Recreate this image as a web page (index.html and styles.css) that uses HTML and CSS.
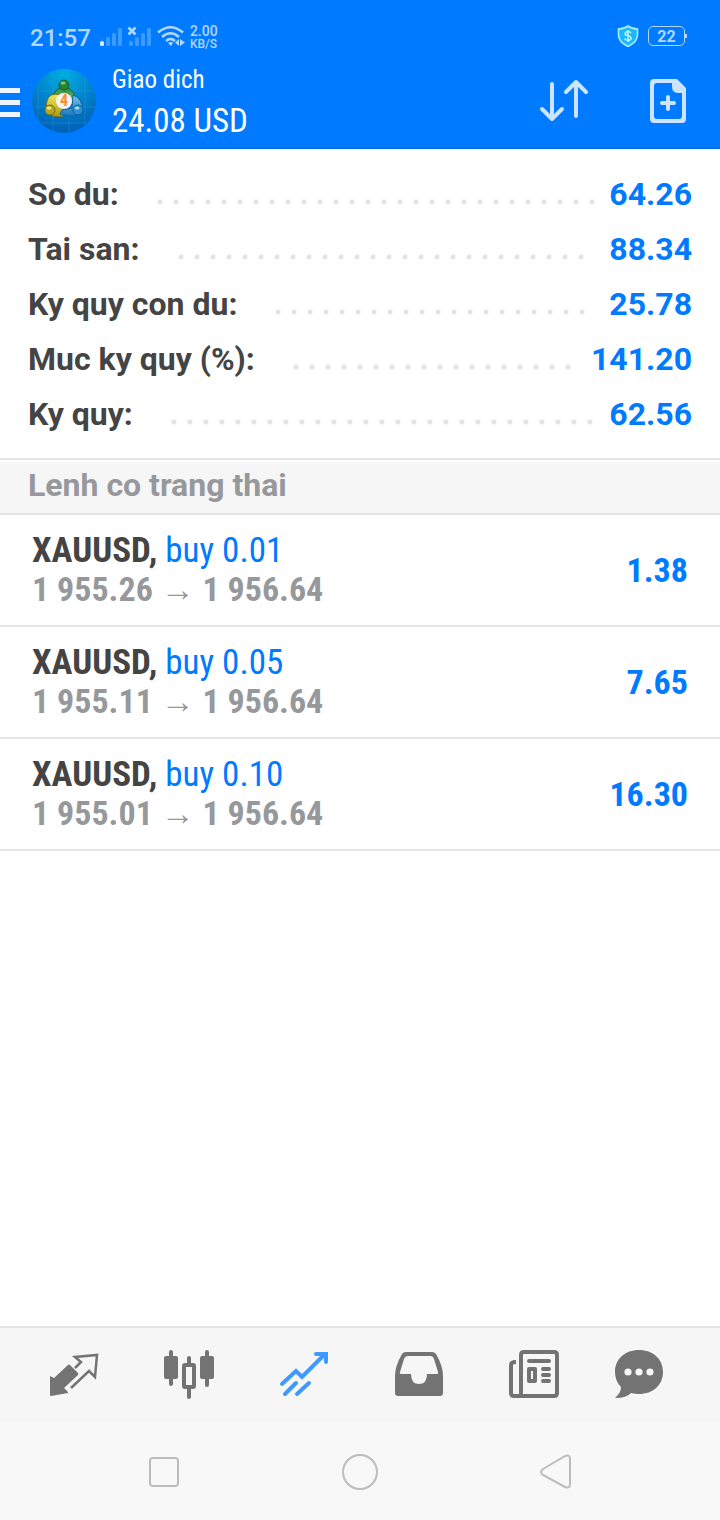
FILE: index.html
```html
<!DOCTYPE html>
<html lang="vi">
<head>
<meta charset="utf-8">
<meta name="viewport" content="width=device-width, initial-scale=1">
<title>Giao dich</title>
<link rel="stylesheet" href="styles.css">
</head>
<body>
<header class="top">
  <div class="status">
    <time class="clock">21:57</time>
    <svg class="signals" width="90" height="30" viewBox="0 -5 90 30" aria-hidden="true">
      <g fill="#3d9aff"><rect x="6" y="11" width="4" height="9" rx="1.500"/><rect x="12" y="7" width="4" height="13" rx="1.500"/><rect x="18" y="2" width="4" height="18" rx="1.500"/><rect x="29" y="15" width="4" height="5" rx="1.500"/><rect x="35" y="11" width="4" height="9" rx="1.500"/><rect x="41" y="7" width="4" height="13" rx="1.500"/><rect x="47" y="2" width="4" height="18" rx="1.500"/></g>
      <rect x="0" y="15" width="4" height="5" rx="1.500" fill="#d4e8ff"/>
      <g fill="none" stroke="#b2d7ff" stroke-width="2.600"><path d="M28.500 1.500l7 7m0-7l-7 7"/><path d="M58 6.500q12.500-10.500 25 0M62 11q8.500-7.500 17 0M66 15q4.500-4 9 0"/></g>
      <path d="M68 17q3-2 5 0l-2 3zM79 13v7l-4-3.500zM80 13l5 3.500-5 3.500z" fill="#b2d7ff"/>
    </svg>
    <span class="speed"><span>2.00</span><span>KB/S</span></span>
    <svg class="shield" width="22" height="22" viewBox="0 0 22 22" aria-hidden="true"><path d="M11 1q4 3 9.500 3v6q0 7-9.500 11.500Q1.500 17 1.500 10V4Q7 4 11 1z" fill="#1cb9fa" stroke="#a8edff" stroke-width="1.600"/><path d="M14 8q-1-1.500-3-1.500T8 8.500q0 1.700 3 2.200t3 2.500q0 2-3 2t-3.200-1.700M11 5v12" fill="none" stroke="#b8f1ff" stroke-width="1.600"/></svg>
    <span class="battery">22</span>
  </div>
  <div class="bar">
    <button class="menu" aria-label="Menu"><span></span><span></span><span></span></button>
    <svg class="logo" width="64" height="64" viewBox="0 0 64 64" aria-hidden="true">
      <defs>
        <radialGradient id="sky" cx=".5" cy=".08" r=".9"><stop offset="0" stop-color="#00aee2"/><stop offset=".5" stop-color="#0085cc"/><stop offset="1" stop-color="#0061b7"/></radialGradient>
        <linearGradient id="green" x2="0" y2="1"><stop offset="0" stop-color="#268c38"/><stop offset="1" stop-color="#8bc48a"/></linearGradient>
        <linearGradient id="gold" x2="0" y2="1"><stop offset="0" stop-color="#f1e95d"/><stop offset="1" stop-color="#a99a14"/></linearGradient>
        <linearGradient id="blue" x2="0" y2="1"><stop offset="0" stop-color="#77c5ec"/><stop offset="1" stop-color="#1676bd"/></linearGradient>
      </defs>
      <circle cx="32" cy="32" r="32" fill="url(#sky)"/>
      <path d="M6 14v36M21 2v60M37 1v62M53 9v46M9 22h52M1 38h62M10 54h44" stroke="#3ba6dc" stroke-opacity=".3" fill="none"/>
      <path d="M21 34q-1-15 11-16 12 1 12 18l-6-1-6-7z" fill="url(#green)" stroke="#176426"/>
      <path d="M29 26q-12-3-14 6-2 7 0 12 6 5 16 3l2-5-6-5z" fill="url(#gold)" stroke="#75711c"/>
      <path d="M41 26q9 3 10 15-6 10-23 4l2-4 10-2z" fill="url(#blue)" stroke="#10649f"/>
      <circle cx="32" cy="16" r="5" fill="#258537" stroke="#12612a"/><ellipse cx="31" cy="14" rx="2.500" ry="1.500" fill="#83c584"/>
      <circle cx="18" cy="41" r="5" fill="#b6a81d" stroke="#716d1c"/><ellipse cx="17" cy="39" rx="2.500" ry="1.500" fill="#eee991"/>
      <circle cx="46" cy="41" r="5" fill="#2e91cf" stroke="#0d5d9b"/><ellipse cx="45" cy="39" rx="2.500" ry="1.500" fill="#a3dcf4"/>
      <circle cx="32" cy="32" r="8" fill="#f6f3ee"/>
      <text x="32" y="37" class="logo-digit">4</text>
    </svg>
    <div class="heading"><h1 class="title">Giao dich</h1><span class="profit">24.08 USD</span></div>
    <button class="action" aria-label="Sort"><svg width="50" height="44" viewBox="0 0 50 44"><path d="M13 5v35M3 30l10 10 10-10M37 37V3M27 13L37 3l10 10" fill="none" stroke="#cce4ff" stroke-width="4" stroke-linecap="round" stroke-linejoin="round"/></svg></button>
    <button class="action" aria-label="New order"><svg width="36" height="44" viewBox="0 0 36 44"><path fill="#cce4ff" fill-rule="evenodd" d="M4 0H27l9 9v31q0 4-4 4H4q-4 0-4-4V4Q0 0 4 0zM7 4Q4 4 4 7v30q0 3 3 3h22q3 0 3-3V14h-3q-7 0-7-6V4z"/><path d="M18 18v12M12 24h12" stroke="#cce4ff" stroke-width="4" stroke-linecap="round"/></svg></button>
  </div>
</header>
<main>
  <dl class="summary">
    <div class="line"><dt>So du:</dt><dd class="leader"></dd><dd class="amount">64.26</dd></div>
    <div class="line"><dt>Tai san:</dt><dd class="leader"></dd><dd class="amount">88.34</dd></div>
    <div class="line"><dt>Ky quy con du:</dt><dd class="leader"></dd><dd class="amount">25.78</dd></div>
    <div class="line"><dt>Muc ky quy (%):</dt><dd class="leader"></dd><dd class="amount">141.20</dd></div>
    <div class="line"><dt>Ky quy:</dt><dd class="leader"></dd><dd class="amount">62.56</dd></div>
  </dl>
  <h2 class="section">Lenh co trang thai</h2>
  <ul class="trades">
    <li class="trade"><div class="details"><p class="order"><strong>XAUUSD,</strong> buy 0.01</p><p class="prices">1 955.26 <span class="arrow">→</span> 1 956.64</p></div><strong class="gain">1.38</strong></li>
    <li class="trade"><div class="details"><p class="order"><strong>XAUUSD,</strong> buy 0.05</p><p class="prices">1 955.11 <span class="arrow">→</span> 1 956.64</p></div><strong class="gain">7.65</strong></li>
    <li class="trade"><div class="details"><p class="order"><strong>XAUUSD,</strong> buy 0.10</p><p class="prices">1 955.01 <span class="arrow">→</span> 1 956.64</p></div><strong class="gain">16.30</strong></li>
  </ul>
</main>
<nav class="tabs">
  <button class="tab" aria-label="Quotes"><svg width="50" height="50" viewBox="0 0 50 50"><path d="M1 26l4 2 14-13q1-1 2 0l8 8q1 1 0 2L15 38l4 4v1L2 46q-1 0-1-1z" fill="#737373"/><path d="M26 18l6-6-6-5 22-2-2 22-6-6-18 17" fill="none" stroke="#737373" stroke-width="2.500"/></svg></button>
  <button class="tab" aria-label="Charts"><svg width="50" height="50" viewBox="0 0 50 50"><g fill="#737373"><rect y="6" width="14" height="23" rx="2"/><rect x="5" width="4" height="36" rx="2"/><rect x="36" y="6" width="14" height="23" rx="2"/><rect x="41" width="4" height="37" rx="2"/><rect x="23" y="6" width="4" height="43" rx="2"/></g><rect x="20" y="15" width="10" height="22" rx="1" fill="#f6f6f6" stroke="#737373" stroke-width="4"/></svg></button>
  <button class="tab" aria-label="Trade" aria-current="page"><svg width="50" height="50" viewBox="0 0 50 50"><path d="M3 34l14-13 6 6L45 5M37 4h10v8M6 44l11-11M18 44l12-11" fill="none" stroke="#4099ff" stroke-width="4" stroke-linecap="round"/></svg></button>
  <button class="tab" aria-label="History"><svg width="50" height="50" viewBox="0 0 50 50"><path fill="#737373" fill-rule="evenodd" d="M12 2h26q3 0 4 2 7 12 7 22v17q0 3-3 3H4q-3 0-3-3V26Q1 16 8 4q1-2 4-2zm2 4q-3 0-4 3L6 22q-1 2 2 2h9q0 10 8 10t8-10h9q3 0 2-2L40 9q-1-3-4-3z"/></svg></button>
  <button class="tab" aria-label="News"><svg width="50" height="50" viewBox="0 0 50 50"><g fill="none" stroke="#737373" stroke-width="4"><path d="M12 46V5q0-3 3-3h30q3 0 3 3v38q0 3-3 3H5q-3 0-3-3V15q0-3 5-3"/><path d="M20 11h20M34 19h6M34 25h6M34 31h6" stroke-linecap="round"/><rect x="20" y="19" width="6" height="12" stroke-linejoin="round"/></g></svg></button>
  <button class="tab" aria-label="Chat"><svg width="50" height="50" viewBox="0 0 50 50"><path d="M25 0C11 0 1 9 1 22q0 9 6 15 0 6-6 11 12 0 16-5 4 1 8 1c14 0 24-9 24-22S39 0 25 0z" fill="#737373"/><g fill="#f6f6f6"><circle cx="14" cy="22" r="3.600"/><circle cx="25" cy="22" r="3.600"/><circle cx="36" cy="22" r="3.600"/></g></svg></button>
</nav>
<footer class="system">
  <button class="key" aria-label="Recent apps"><svg width="38" height="38" viewBox="0 0 38 38"><rect x="5" y="5" width="28" height="28" rx="3"/></svg></button>
  <button class="key" aria-label="Home"><svg width="38" height="38" viewBox="0 0 38 38"><circle cx="19" cy="19" r="17"/></svg></button>
  <button class="key" aria-label="Back"><svg width="38" height="38" viewBox="0 0 38 38"><path d="M28 3L6 16q-4 3 0 6l22 12q5 2 5-3V6q0-5-5-3z"/></svg></button>
</footer>
</body>
</html>
```
FILE: styles.css
```css
* { box-sizing: border-box; }
body {
  margin: 0;
  min-height: 100vh;
  display: flex;
  flex-direction: column;
  background: #fff;
  color: #444;
  font-family: Roboto, "Liberation Sans", sans-serif;
}
h1, h2, p, dl, dd, ul { margin: 0; padding: 0; }
button { padding: 0; border: 0; background: none; font: inherit; }
svg { display: block; }
main { flex: 1; }

.top { background: #007aff; border-bottom: 2px solid #006ee6; color: #fff; }
.status {
  display: flex;
  align-items: center;
  height: 60px;
  padding: 12px 35px 0 30px;
  color: #b2d7ff;
}
.clock { padding-top: 4px; font-size: 24px; line-height: 28px; font-weight: 500; }
.signals { margin-left: 9px; }
.speed { display: flex; flex-direction: column; padding-top: 4px; font-size: 12px; line-height: 13px; font-weight: 500; }
.speed span:first-child { font-size: 14px; }
.shield { margin-left: auto; }
.battery {
  position: relative;
  width: 37px;
  height: 20px;
  margin-left: 9px;
  border: 1px solid #b2d7ff;
  border-radius: 5px;
  font-size: 16px;
  line-height: 19px;
  font-weight: 700;
  text-align: center;
}
.battery::after {
  content: "";
  position: absolute;
  top: 7px;
  right: -3px;
  width: 2px;
  height: 4px;
  background: #b2d7ff;
}
.bar { display: flex; align-items: center; height: 87px; padding: 0 34px 5px 0; }
.menu { display: flex; flex-direction: column; gap: 7px; width: 20px; margin-right: 12px; padding-top: 2px; }
.menu span { height: 5px; background: #ebf5ff; }
.logo-digit { font: 700 16px "Roboto Condensed", Roboto, sans-serif; fill: #f29135; text-anchor: middle; }
.heading {
  display: flex;
  flex: 1;
  flex-direction: column;
  margin-left: 16px;
  font-family: "Roboto Condensed", Roboto, "Liberation Sans", sans-serif;
}
.title { font-size: 25px; line-height: 40px; font-weight: 400; }
.profit { font-size: 33px; line-height: 42px; }
.action { margin-left: 61px; }

.summary { padding: 17px 28px; border-bottom: 2px solid #e4e4e4; }
.line { display: flex; align-items: center; height: 55px; font-size: 32px; line-height: 38px; font-weight: 700; }
.leader { flex: 1; margin: 16px 4px 0 38px; }
.leader::before {
  content: "";
  display: block;
  width: round(down, 100%, 16px);
  height: 6px;
  background: radial-gradient(circle at 3px 3px, #e4e4e4 2px, transparent 3px) 0 0 / 16px 6px repeat-x;
}
.amount { color: #007aff; }
.section {
  margin-top: 2px;
  padding: 4px 28px 9px;
  background: #f6f6f6;
  border-bottom: 2px solid #e4e4e4;
  color: #97989c;
  font-size: 32px;
  line-height: 38px;
}
.trades { list-style: none; }
.trade {
  display: flex;
  align-items: center;
  justify-content: space-between;
  height: 112px;
  padding: 0 32px;
  border-bottom: 2px solid #e4e4e4;
  font-family: "Roboto Condensed", Roboto, "Liberation Sans", sans-serif;
  font-size: 34px;
  line-height: 39px;
}
.order { color: #007aff; font-size: 35px; }
.order strong { color: #444; }
.prices { color: #97989c; font-weight: 700; }
.arrow { font-weight: 400; }
.gain { color: #007aff; }

.tabs {
  display: grid;
  grid-template-columns: repeat(5, 115fr) 94fr;
  justify-items: center;
  padding: 22px 34px 23px 16px;
  background: #f6f6f6;
  border-top: 2px solid #e4e4e4;
}
.system {
  display: flex;
  justify-content: space-between;
  padding: 30px 145px 29px;
  background: #f8f8f8;
}
.key svg { fill: none; stroke: #bcbcbc; stroke-width: 2; }
```
